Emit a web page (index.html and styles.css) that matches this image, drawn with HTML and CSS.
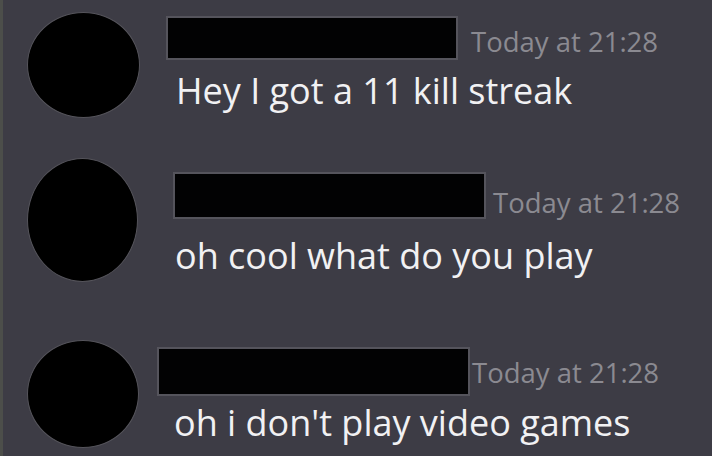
FILE: index.html
```html
<!DOCTYPE html>
<html lang="en">
<head>
<meta charset="utf-8">
<title>Chat</title>
<link rel="stylesheet" href="styles.css">
</head>
<body>
<main class="chat">
  <article class="msg msg-1">
    <div class="avatar"></div>
    <div class="body">
      <div class="head"><span class="redact"></span><time class="time">Today at 21:28</time></div>
      <p class="text">Hey I got a 11 kill streak</p>
    </div>
  </article>
  <article class="msg msg-2">
    <div class="avatar"></div>
    <div class="body">
      <div class="head"><span class="redact"></span><time class="time">Today at 21:28</time></div>
      <p class="text">oh cool what do you play</p>
    </div>
  </article>
  <article class="msg msg-3">
    <div class="avatar"></div>
    <div class="body">
      <div class="head"><span class="redact"></span><time class="time">Today at 21:28</time></div>
      <p class="text">oh i don't play video games</p>
    </div>
  </article>
</main>
</body>
</html>
```
FILE: styles.css
```css
html, body {
  margin: 0;
  padding: 0;
  background: #3d3c45;
}
.chat {
  width: 712px;
  height: 456px;
  display: grid;
  grid-template-rows: 140px 180px 1fr;
  border-left: 3px solid #4c4e4a;
  box-sizing: border-box;
  font-family: "Open Sans", Lato, sans-serif;
  overflow: hidden;
}
.msg {
  display: flex;
  align-items: flex-start;
}
.avatar {
  flex: none;
  background: #000;
  border: 1px solid #55545b;
  border-radius: 50%;
  box-sizing: border-box;
}
.body {
  display: flex;
  flex-direction: column;
}
.head {
  display: flex;
  align-items: flex-end;
}
.redact {
  display: block;
  background: #020203;
  border: 2px solid #55545c;
  box-sizing: border-box;
}
.time {
  color: #8b8a91;
  font-size: 27.5px;
  line-height: 29px;
  white-space: nowrap;
}
.text {
  margin: 0;
  color: #f1f1f3;
  font-size: 36px;
  line-height: 37px;
  white-space: nowrap;
}

/* message 1 */
.msg-1 .avatar { margin: 12px 0 0 24px; width: 113px; height: 106px; }
.msg-1 .body { margin: 16px 0 0 26px; }
.msg-1 .redact { width: 292px; height: 44px; }
.msg-1 .time { margin: 0 0 4px 13px; }
.msg-1 .text { margin: 12px 0 0 10px; }

/* message 2 */
.msg-2 .avatar { margin: 18px 0 0 24px; width: 111px; height: 124px; }
.msg-2 .body { margin: 32px 0 0 35px; }
.msg-2 .redact { width: 313px; height: 47px; }
.msg-2 .time { margin: 0 0 2px 7px; }
.msg-2 .text { margin: 18px 0 0 2px; }

/* message 3 */
.msg-3 .avatar { margin: 20px 0 0 24px; width: 112px; height: 108px; }
.msg-3 .body { margin: 27px 0 0 18px; }
.msg-3 .redact { width: 313px; height: 49px; }
.msg-3 .time { margin: 0 0 9px 2px; }
.msg-3 .text { margin: 8px 0 0 17px; }
```
